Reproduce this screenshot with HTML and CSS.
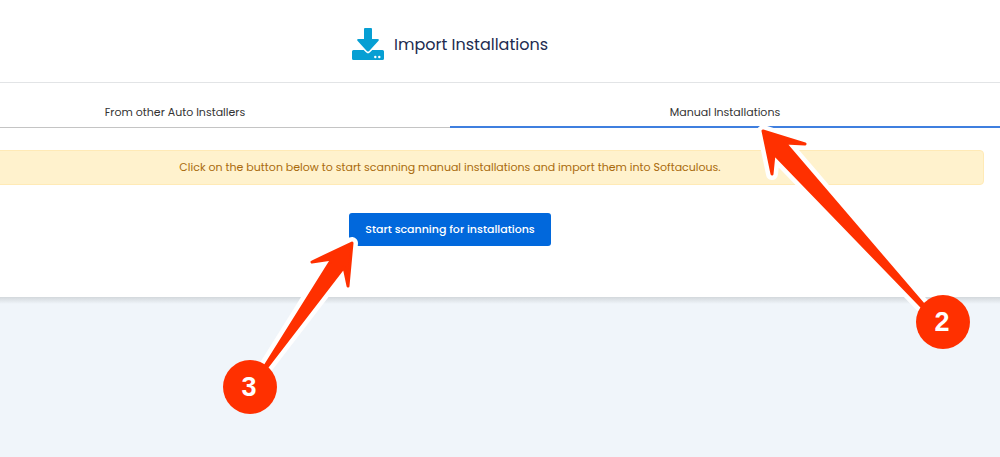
FILE: index.html
```html
<!DOCTYPE html>
<html lang="en">
<head>
    <meta charset="UTF-8">
    <meta name="viewport" content="width=device-width, initial-scale=1.0">
    <title>Import Installations</title>
    <link rel="stylesheet" href="styles.css">
</head>
<body>
    <main class="panel">
        <header class="panel-header">
            <svg class="import-icon" viewBox="0 0 32 32" aria-hidden="true">
                <path fill="#079fd3" d="M13 0h6a1 1 0 0 1 1 1v10h5.500q2.300.2 .8 2L17.200 23q-1.200 1-2.400 0L5.700 13q-1.500-1.800.8-2H12V1a1 1 0 0 1 1-1z"/>
                <path fill="#079fd3" d="M1.500 22h10.200l2.500 2.600q1.800 1.600 3.600 0L20.300 22h10.200a1.500 1.500 0 0 1 1.500 1.500v7a1.500 1.500 0 0 1-1.500 1.500h-29A1.500 1.500 0 0 1 0 30.500v-7A1.500 1.500 0 0 1 1.500 22z"/>
                <circle cx="23.300" cy="29" r="1.200" fill="#fff"/>
                <circle cx="27.300" cy="29" r="1.200" fill="#fff"/>
            </svg>
            <h1>Import Installations</h1>
        </header>
        <nav class="tabs">
            <a href="#auto" class="tab">From other Auto Installers</a>
            <a href="#manual" class="tab active">Manual Installations</a>
        </nav>
        <div class="content">
            <div class="alert">Click on the button below to start scanning manual installations and import them into Softaculous.</div>
            <button type="button" class="scan-btn">Start scanning for installations</button>
        </div>
    </main>
    <div class="panel-shadow"></div>

    <!-- step markers -->
    <svg class="steps" width="1000" height="457" viewBox="0 0 1000 457">
        <g class="arrow">
            <path d="M763 131L805 144L785 143L923 304L921 306L774 154L772 174Z"/>
            <path d="M352 243L312 262L332 259L265 366L267 367L344 267L348 286Z"/>
        </g>
        <g class="arrow-fill">
            <path d="M763 131L805 144L785 143L923 304L921 306L774 154L772 174Z"/>
            <path d="M352 243L312 262L332 259L265 366L267 367L344 267L348 286Z"/>
        </g>
        <circle cx="943" cy="322" r="27"/>
        <circle cx="250" cy="387" r="27"/>
        <text x="942" y="331">2</text>
        <text x="249" y="396">3</text>
    </svg>
</body>
</html>
```

FILE: styles.css
```css
body { margin: 0; background: #f0f5fa; color: #333; font-family: Poppins, Inter, sans-serif; font-size: 11px; }
.panel { margin-left: -100px; background: #fff; padding-bottom: 51px; }
.panel-shadow { height: 7px; background: linear-gradient(#d3d8dc, #f0f5fa); }
.panel-header { display: flex; align-items: center; justify-content: center; gap: 10px; padding: 25px 0 19px; border-bottom: 1px solid #e2e4e6; }
.panel-header h1 { margin: 0; padding-top: 2px; font-size: 16px; font-weight: 400; line-height: 36px; color: #222b50; }
.import-icon { width: 32px; height: 32px; }
.tabs { display: flex; padding-top: 13px; }
.tab { flex: 1; height: 31px; line-height: 32px; border-bottom: 1px solid #c4c4c4; text-align: center; color: #333; text-decoration: none; }
.tab.active { height: 30px; border-bottom: 2px solid #3f7fdf; }
.content { padding: 22px 16px 0; text-align: center; }
.alert { padding: 8px; line-height: 17px; background: #fff2cd; color: #a96a0c; border: 1px solid #ffeab6; border-radius: 4px; }
.scan-btn { margin-top: 28px; padding: 0 16px; height: 33px; border: 0; border-radius: 3px; background: #0168dc; color: #fff; font-family: inherit; font-size: 11px; font-weight: 500; cursor: pointer; }

.steps { position: absolute; top: 0; left: 0; pointer-events: none; }
.steps circle { fill: #ff3000; }
.steps text { fill: #fff; font-family: "Liberation Sans", Arial, sans-serif; font-size: 27px; font-weight: 700; text-anchor: middle; }
.arrow path { fill: #fff; stroke: #fff; stroke-width: 12px; stroke-linejoin: round; }
.arrow-fill path { fill: #ff3000; stroke: #ff3000; stroke-width: 3px; stroke-linejoin: round; }
```
